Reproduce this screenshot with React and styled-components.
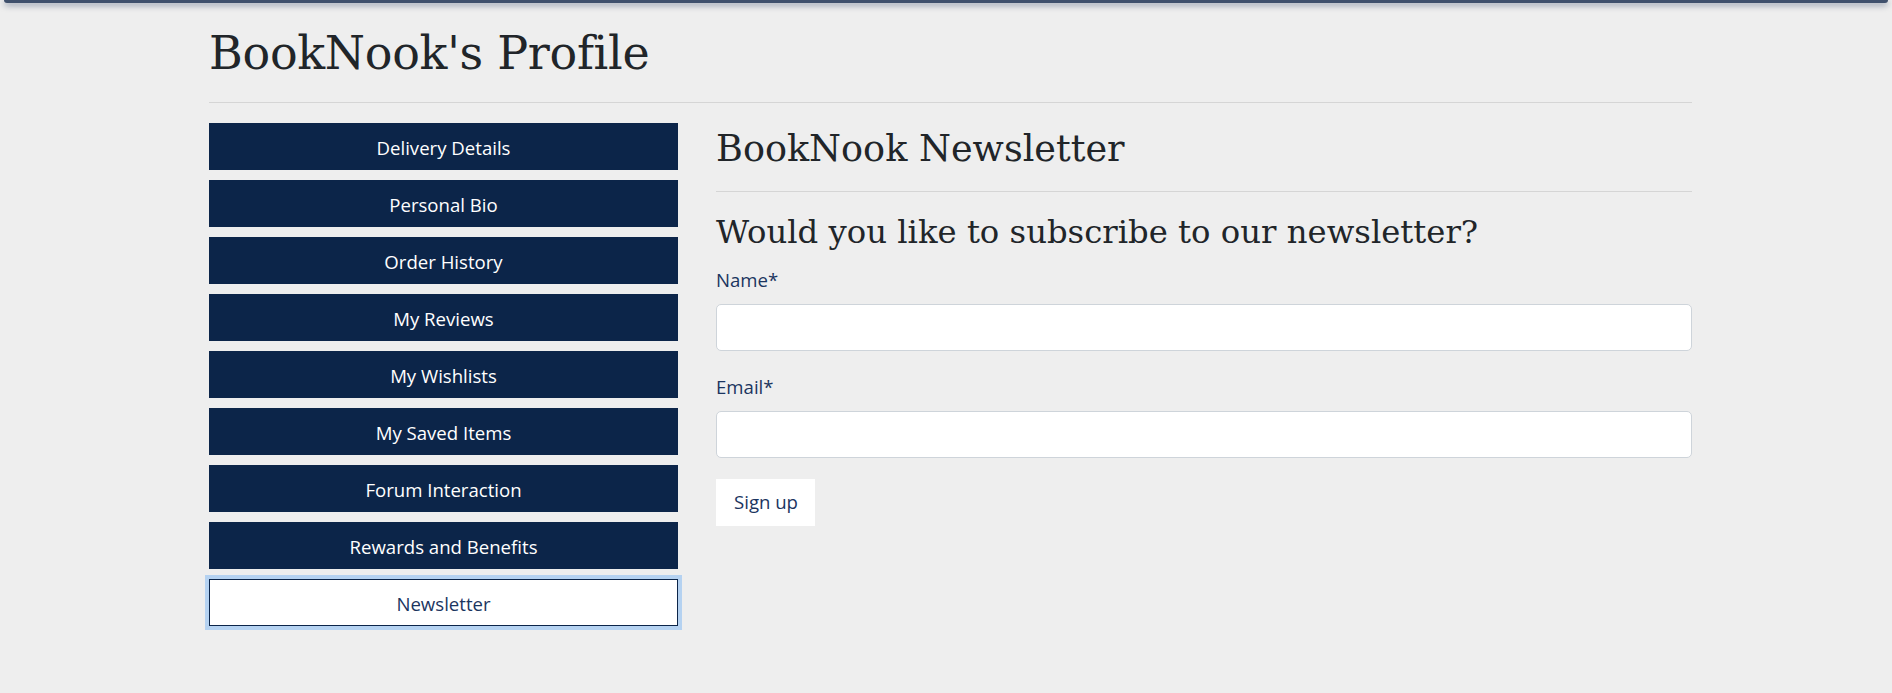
import React from "react";
import styled, { createGlobalStyle } from "styled-components";

const GlobalStyle = createGlobalStyle`
  html, body {
    margin: 0;
    padding: 0;
    background: #eeeeee;
    min-height: 100%;
  }
  body {
    font-family: "Open Sans", "Noto Sans", sans-serif;
    color: #212529;
  }
  * { box-sizing: border-box; }
`;

const TopBar = styled.div`
  height: 3px;
  margin: 0 4px;
  border-radius: 0 0 4px 4px;
  background: #3f506c;
  box-shadow: 0 2px 6px rgba(40, 60, 95, 0.65);
`;

const Page = styled.div`
  padding: 23px 200px 40px 209px;
`;

const Title = styled.h1`
  margin: 0;
  font-family: "DejaVu Serif", "Liberation Serif", serif;
  font-weight: 400;
  font-size: 46px;
  letter-spacing: -0.3px;
  line-height: 1.2;
  color: #212529;
`;

const Rule = styled.hr`
  margin: ${(p) => p.$top || 0}px 0 ${(p) => p.$bottom || 0}px;
  border: 0;
  border-top: 1px solid #d5d5d5;
  height: 0;
`;

const Layout = styled.div`
  display: grid;
  grid-template-columns: 469px 1fr;
  column-gap: 38px;
`;

const SideNav = styled.nav`
  display: flex;
  flex-direction: column;
  gap: 10px;
`;

const NavButton = styled.button`
  display: flex;
  align-items: center;
  justify-content: center;
  height: 47px;
  width: 100%;
  padding: 2px 12px 0;
  margin: 0;
  border: 1px solid #0c2549;
  border-radius: 0;
  background: ${(p) => (p.$active ? "#ffffff" : "#0c2549")};
  color: ${(p) => (p.$active ? "#1b355f" : "#ffffff")};
  box-shadow: ${(p) => (p.$active ? "0 0 0 4px #b5d2f1" : "none")};
  font-family: "Open Sans", "Noto Sans", sans-serif;
  font-size: 18.6px;
  line-height: 1.5;
  cursor: pointer;
`;

const Main = styled.section`
  display: flex;
  flex-direction: column;
`;

const SectionTitle = styled.h2`
  margin: 4px 0 0;
  font-family: "DejaVu Serif", "Liberation Serif", serif;
  font-weight: 400;
  font-size: 36.6px;
  line-height: 1.2;
  color: #212529;
`;

const Question = styled.h3`
  margin: 0;
  font-family: "DejaVu Serif", "Liberation Serif", serif;
  font-weight: 400;
  font-size: 32.3px;
  line-height: 1.2;
  color: #212529;
`;

const Form = styled.form`
  display: flex;
  flex-direction: column;
  align-items: flex-start;
  margin-top: 14px;
`;

const Field = styled.div`
  display: flex;
  flex-direction: column;
  width: 100%;
  margin-bottom: ${(p) => p.$gap}px;
`;

const Label = styled.label`
  font-size: 18.6px;
  line-height: 1.5;
  color: #1b355f;
  margin-bottom: 10px;
`;

const Input = styled.input`
  height: 47px;
  width: 100%;
  border: 1px solid #ced4da;
  border-radius: 5px;
  background: #ffffff;
  padding: 6px 12px;
  font-family: inherit;
  font-size: 18px;
  outline: none;
`;

const SubmitButton = styled.button`
  height: 47px;
  padding: 0 17px 0 18px;
  border: 0;
  border-radius: 0;
  background: #ffffff;
  color: #1b355f;
  font-family: "Open Sans", "Noto Sans", sans-serif;
  font-size: 18.6px;
  line-height: 1.5;
  cursor: pointer;
`;

const navItems = [
  "Delivery Details",
  "Personal Bio",
  "Order History",
  "My Reviews",
  "My Wishlists",
  "My Saved Items",
  "Forum Interaction",
  "Rewards and Benefits",
  "Newsletter",
];

export default function App() {
  return (
    <>
      <GlobalStyle />
      <TopBar />
      <Page>
        <Title>BookNook's Profile</Title>
        <Rule $top={21} $bottom={20} />
        <Layout>
          <SideNav>
            {navItems.map((item) => (
              <NavButton key={item} type="button" $active={item === "Newsletter"}>
                {item}
              </NavButton>
            ))}
          </SideNav>
          <Main>
            <SectionTitle>BookNook Newsletter</SectionTitle>
            <Rule $top={20} $bottom={21} />
            <Question>Would you like to subscribe to our newsletter?</Question>
            <Form onSubmit={(e) => e.preventDefault()}>
              <Field $gap={22}>
                <Label htmlFor="nl-name">Name*</Label>
                <Input id="nl-name" type="text" />
              </Field>
              <Field $gap={21}>
                <Label htmlFor="nl-email">Email*</Label>
                <Input id="nl-email" type="email" />
              </Field>
              <SubmitButton type="submit">Sign up</SubmitButton>
            </Form>
          </Main>
        </Layout>
      </Page>
    </>
  );
}
